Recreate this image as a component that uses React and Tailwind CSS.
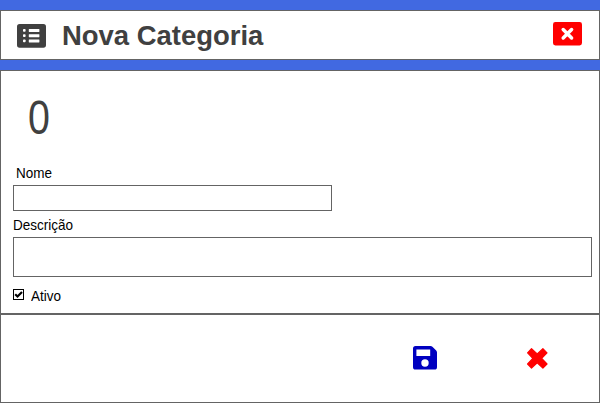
function ListIcon() {
  return (
    <svg className="h-6 w-[29px]" viewBox="0 0 29 24">
      <rect width="29" height="23.7" rx="2.6" fill="#404040" />
      <g fill="white">
        <rect x="6" y="5" width="2.6" height="2.8" rx="0.8" />
        <rect x="6" y="10.3" width="2.6" height="2.8" rx="0.8" />
        <rect x="6" y="15.5" width="2.6" height="2.8" rx="0.8" />
        <rect x="11.8" y="4.9" width="10.6" height="3" rx="0.4" />
        <rect x="11.8" y="10.2" width="10.6" height="3" rx="0.4" />
        <rect x="11.8" y="15.4" width="10.6" height="3" rx="0.4" />
      </g>
    </svg>
  );
}

function CloseIcon() {
  return (
    <svg className="h-6 w-[29px]" viewBox="0 0 29 24">
      <rect width="29" height="23.4" rx="2.4" fill="#ff0000" />
      <path d="M10.2 7.6 L18.6 16 M18.6 7.6 L10.2 16" stroke="white" strokeWidth="3.5" strokeLinecap="round" />
    </svg>
  );
}

function SaveIcon() {
  return (
    <svg className="size-6" viewBox="0 0 24 24">
      <path
        d="M2.5 0 H17.5 Q18.6 0 19.4 0.8 L23.2 4.6 Q24 5.4 24 6.5 V21 Q24 23.6 21.5 23.6 H2.5 Q0 23.6 0 21 V2.5 Q0 0 2.5 0 Z M3.4 3.4 V10 H17.2 V3.4 Z M12 13.3 A3.7 3.7 0 1 0 12 20.7 A3.7 3.7 0 1 0 12 13.3 Z"
        fill="#0000c0"
        fillRule="evenodd"
      />
    </svg>
  );
}

function CancelIcon() {
  return (
    <svg className="size-[21px]" viewBox="0 0 21 21">
      <path
        d="M4.5 0.7 L10.2 5.9 L15.9 0.7 L20 4.8 L14.7 10.4 L20 16 L15.9 20 L10.2 14.8 L4.5 20 L0.6 16 L5.8 10.4 L0.6 4.8 Z"
        fill="#ff0000"
        stroke="#ff0000"
        strokeWidth="1.2"
        strokeLinejoin="round"
      />
    </svg>
  );
}

function Label({ children, className = "" }) {
  return (
    <span className={`block w-fit origin-left scale-x-[0.9] whitespace-nowrap text-[15px] leading-4 text-black ${className}`}>
      {children}
    </span>
  );
}

export default function App() {
  return (
    <div className="flex h-[403px] w-[600px] flex-col overflow-hidden bg-[#4169e1] pt-2.5 font-['Liberation_Sans',Arial,sans-serif]">
      <header className="mb-2.5 flex h-[50px] shrink-0 items-start border border-[#646464] bg-white pl-4 pr-[17px]">
        <div className="mt-[13px]">
          <ListIcon />
        </div>
        <h1 className="ml-[15.5px] mt-[9px] w-fit origin-left scale-x-[0.98] whitespace-nowrap text-[28px] font-bold leading-8 text-[#404040]">
          Nova Categoria
        </h1>
        <button className="ml-auto mt-[11px]" aria-label="Fechar">
          <CloseIcon />
        </button>
      </header>

      <main className="flex h-[244px] shrink-0 flex-col border border-[#646464] bg-white pl-3 pr-[7px]">
        <div className="ml-[15px] mt-5 w-fit origin-left scale-x-[0.82] text-[48px] leading-[53px] text-[#404040]">0</div>
        <Label className="ml-[3px] mt-[21px]">Nome</Label>
        <input className="mt-1 h-[26px] w-[319px] shrink-0 border border-[#646464] bg-white px-1 text-sm outline-none" aria-label="Nome" />
        <Label className="mt-[6px]">Descrição</Label>
        <input className="mt-1 h-10 w-[579px] shrink-0 border border-[#646464] bg-white px-1 text-sm outline-none" aria-label="Descrição" />
        <div className="mt-[11px] flex h-4 items-start">
          <span className="mt-px flex size-[11px] items-center justify-center border border-black" role="checkbox" aria-checked="true">
            <svg className="size-[9px]" viewBox="0 0 9 9" fill="none" stroke="black" strokeWidth="2.2">
              <path d="M1.2 4.2 L3.5 6.5 L8 2" />
            </svg>
          </span>
          <Label className="ml-[7px]">Ativo</Label>
        </div>
      </main>

      <footer className="flex h-[89px] shrink-0 items-start justify-end border border-[#646464] bg-white pr-[51px]">
        <button className="mr-[90px] mt-[31px]" aria-label="Salvar">
          <SaveIcon />
        </button>
        <button className="mt-[33px]" aria-label="Cancelar">
          <CancelIcon />
        </button>
      </footer>
    </div>
  );
}
